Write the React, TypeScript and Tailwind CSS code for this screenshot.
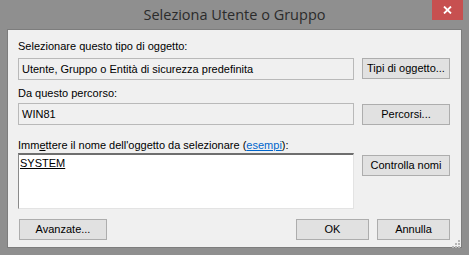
import React from "react";

const Btn = ({ children, className = "" }: { children: React.ReactNode; className?: string }) => (
  <div
    className={`h-[21px] flex items-center justify-center bg-[#e1e1e1] border border-[#adadad] text-[11px] text-black ${className}`}
  >
    {children}
  </div>
);

export default function App() {
  return (
    <div
      className="relative w-[469px] h-[255px] bg-[#8f8f8f] flex flex-col overflow-hidden"
      style={{ fontFamily: '"Liberation Sans", Arial, sans-serif' }}
    >
      <div className="h-[29px] flex items-center justify-center">
        <span
          className="text-[14.5px] text-[#2b2b2b] pt-[1px]"
          style={{ fontFamily: '"Open Sans", "Noto Sans", sans-serif' }}
        >
          Seleziona Utente o Gruppo
        </span>
      </div>
      <div className="absolute top-0 left-[432px] w-[31px] h-[20px] bg-[#c75050] flex items-center justify-center">
        <svg width="9" height="8" viewBox="0 0 9 8">
          <path d="M1 0.5 L8 7.5 M8 0.5 L1 7.5" stroke="#fff" strokeWidth="1.8" />
        </svg>
      </div>

      <div className="ml-[7px] w-[455px] h-[219px] bg-[#f0f0f0] border border-[#7d7d7d] pl-[10px] pr-[11px] flex flex-col text-[11px] leading-[13px] text-black">
        <div className="mt-[10px]">Selezionare questo tipo di oggetto:</div>
        <div className="mt-[5px] flex gap-[8px] items-start">
          <div className="w-[336px] h-[22px] border border-[#b9b9b9] flex items-center pl-[3px]">
            Utente, Gruppo o Entità di sicurezza predefinita
          </div>
          <Btn className="w-[88px]">Tipi di oggetto...</Btn>
        </div>

        <div className="mt-[7px]">Da questo percorso:</div>
        <div className="mt-[3px] flex gap-[8px] items-start">
          <div className="w-[336px] h-[22px] border border-[#b9b9b9] flex items-center pl-[3px]">WIN81</div>
          <Btn className="w-[88px] mt-[1px]">Percorsi...</Btn>
        </div>

        <div className="mt-[14px]">
          Imm<span className="underline">e</span>ttere il nome dell'oggetto da selezionare (
          <span className="text-[#0066cc] underline">esempi</span>):
        </div>
        <div className="mt-[1px] flex gap-[8px] items-start">
          <div className="w-[336px] h-[56px] bg-white border-t-2 border-l border-t-[#6e6e6e] border-l-[#8a8a8a] border-b border-r border-b-[#e3e3e3] border-r-[#e3e3e3] pl-[1px] pt-[2px]">
            <span className="underline">SYSTEM</span>
          </div>
          <Btn className="w-[88px] mt-[2px]">Controlla nomi</Btn>
        </div>

        <div className="mt-[10px] flex items-start">
          <Btn className="w-[88px] ml-[1px]">Avanzate...</Btn>
          <div className="flex-1" />
          <Btn className="w-[73px] border-[#3399ff]">OK</Btn>
          <Btn className="w-[73px] ml-[8px]">Annulla</Btn>
        </div>
      </div>

      <svg className="absolute left-[452px] top-[240px]" width="8" height="8" viewBox="0 0 8 8">
        <rect x="6" y="0" width="2" height="2" fill="#b5b5b5" />
        <rect x="3" y="3" width="2" height="2" fill="#b5b5b5" />
        <rect x="6" y="3" width="2" height="2" fill="#b5b5b5" />
        <rect x="0" y="6" width="2" height="2" fill="#b5b5b5" />
        <rect x="3" y="6" width="2" height="2" fill="#b5b5b5" />
        <rect x="6" y="6" width="2" height="2" fill="#b5b5b5" />
      </svg>
    </div>
  );
}
